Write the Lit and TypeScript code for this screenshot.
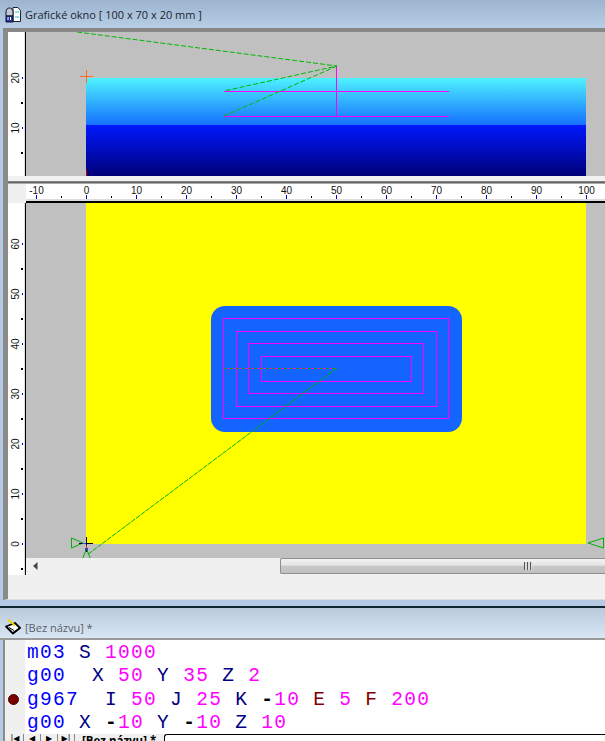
import { LitElement, html, css, svg } from 'lit';
import { customElement } from 'lit/decorators.js';

const CODE = [
  'm03 S 1000',
  'g00  X 50 Y 35 Z 2',
  'g967  I 50 J 25 K -10 E 5 F 200',
  'g00 X -10 Y -10 Z 10',
];

// x ruler: 5px per mm, 0 sits at page x 86
const mmX = (v: number) => 86 + v * 5;

function tokenClass(tok: string) {
  if (/^[gm]\d+$/.test(tok)) return 'cmd';
  if (/^\d+$/.test(tok)) return 'num';
  if (tok === '-') return 'minus';
  if (tok === 'E' || tok === 'F') return 'arg2';
  return 'arg';
}

function vRuler(top: number, h: number, labels: number[], base: number) {
  const items = [];
  for (const v of labels) {
    const y = base - v * 5;
    items.push(svg`<rect x="22" y=${y} width="1" height="2" fill="#0000c8"></rect>`);
    items.push(svg`<rect x="21" y=${y + 25} width="2" height="2" fill="#000"></rect>`);
    items.push(svg`<text transform="translate(19 ${y + 1}) rotate(-90)" text-anchor="middle" class="rt">${v}</text>`);
  }
  return html`<svg class="vruler" width="18" height=${h} viewBox="8 ${top} 18 ${h}">${items}</svg>`;
}

@customElement('app-root')
export class AppRoot extends LitElement {
  static styles = css`
    :host {
      display: block;
      width: 605px;
      height: 741px;
      overflow: hidden;
      background: #b4cbe3;
      font-family: 'Open Sans', 'Liberation Sans', sans-serif;
    }
    svg {
      display: block;
    }
    .title {
      display: flex;
      align-items: center;
      gap: 4px;
      padding-left: 5px;
      height: 28px;
      box-sizing: border-box;
      background: linear-gradient(#9cb4ce, #b7cee6);
      font-size: 11px;
      color: #1c2430;
    }
    .frame {
      margin-left: 3px;
      height: 572px;
      box-sizing: border-box;
      border-top: 4px solid #888;
      border-left: 5px solid #8a8a8a;
      border-bottom: 1px solid #ddd;
      background: #f0f0f0;
      overflow: hidden;
    }
    .pane {
      display: flex;
    }
    .vruler {
      flex: none;
      background: linear-gradient(90deg, #fff 16px, #ddd 16px, #ddd 17px, #000 17px);
    }
    .splitter {
      height: 8px;
      background: linear-gradient(#f2f2f2 5px, #999 5px, #666 6px, #666 7px, #aaa 7px);
    }
    .hrow {
      display: flex;
      height: 19px;
    }
    .corner {
      width: 18px;
      flex: none;
      background: #f0f0f0;
    }
    .hruler {
      flex: none;
      background: linear-gradient(#fff 15px, #ddd 15px, #ddd 17px, #000 17px);
    }
    .rt {
      font: 10px 'Liberation Sans', sans-serif;
      fill: #111;
    }
    .canvas {
      flex: none;
      background: #c0c0c0;
    }
    .main {
      display: flex;
      flex-direction: column;
    }
    .scroll {
      display: flex;
      align-items: stretch;
      width: 579px;
      height: 16px;
      background: #f0f0f0;
    }
    .sbtn {
      width: 18px;
      flex: none;
      display: flex;
      align-items: center;
      justify-content: center;
    }
    .track {
      width: 236px;
      flex: none;
    }
    .thumb {
      flex: 1;
      display: flex;
      align-items: center;
      padding-left: 243px;
      border: 1px solid #8f8f8f;
      border-right: none;
      border-radius: 2px 0 0 2px;
      background: linear-gradient(#f2f2f2, #e4e4e4 45%, #c8c8c8 50%, #c0c0c0);
    }
    .grip {
      width: 8px;
      height: 8px;
      background: repeating-linear-gradient(90deg, #555 0 1px, #ddd 1px 3px);
    }
    .strip {
      height: 8px;
      box-sizing: border-box;
      border-bottom: 2px solid #0c2830;
    }
    .title2 {
      display: flex;
      align-items: center;
      gap: 4px;
      padding: 8px 0 0 5px;
      height: 32px;
      box-sizing: border-box;
      background: linear-gradient(#b9cadb, #d8e6f4);
      border-bottom: 2px solid #9a9a9a;
      font-size: 11px;
      color: #5a5f6a;
    }
    .editor {
      display: flex;
      margin-left: 3px;
      height: 94px;
      border-left: 2px solid #8a8a8a;
      background: #fff;
      overflow: hidden;
    }
    .gutter {
      width: 20px;
      flex: none;
      display: flex;
      flex-direction: column;
      background: #f0f0f0;
      padding-top: 54px;
      box-sizing: border-box;
    }
    .dot {
      width: 11px;
      height: 11px;
      box-sizing: border-box;
      margin: 0 0 0 3px;
      border-radius: 50%;
      background: #7a0000;
      border: 1px solid #400000;
    }
    .codewrap {
      padding: 2px 0 0 2px;
    }
    .code {
      font: 19.5px/23.4px 'Liberation Mono', 'Courier New', monospace;
      letter-spacing: 1.3px;
      white-space: pre;
    }
    .cmd { color: #0000ff; }
    .arg { color: #000080; }
    .arg2 { color: #800000; }
    .num { color: #ff00ff; }
    .minus { color: #000; font-weight: bold; }
    .tabs {
      display: flex;
      align-items: flex-start;
      height: 7px;
      overflow: hidden;
      padding-left: 2px;
      font: bold 11.5px/14px 'Open Sans', sans-serif;
      color: #000;
      background: #f0f0f0;
      border-left: 2px solid #8a8a8a;
      margin-left: 3px;
    }
    .nav {
      width: 17px;
      height: 7px;
      flex: none;
      box-sizing: border-box;
      border-right: 1px solid #888;
      text-align: center;
      font: 8px/10px 'DejaVu Sans', sans-serif;
    }
    .tabname {
      padding: 0 8px 0 7px;
      flex: none;
    }
    .tabfill {
      flex: 1;
      height: 7px;
      box-sizing: border-box;
      border-top: 1px solid #000;
      border-left: 1px solid #000;
      border-radius: 3px 0 0 0;
      background: #fff;
    }
  `;

  private renderHRuler() {
    const items = [];
    for (let v = -10; v <= 100; v += 10) {
      const x = mmX(v);
      items.push(svg`<rect x=${x} y="195" width="1" height="4" fill="#0000c8"></rect>`);
      items.push(svg`<rect x=${x + 25} y="196" width="1" height="2" fill="#000"></rect>`);
      items.push(svg`<text x=${x + 0.5} y="194" text-anchor="middle" class="rt">${v}</text>`);
    }
    return html`<svg class="hruler" width="579" height="19" viewBox="26 184 579 19">${items}</svg>`;
  }

  private renderTop() {
    return html`<svg class="canvas" width="579" height="144" viewBox="26 32 579 144">
      <defs>
        <linearGradient id="g1" x1="0" y1="0" x2="0" y2="1">
          <stop offset="0" stop-color="#4ff2ff"></stop>
          <stop offset="1" stop-color="#1470ff"></stop>
        </linearGradient>
        <linearGradient id="g2" x1="0" y1="0" x2="0" y2="1">
          <stop offset="0" stop-color="#0018ff"></stop>
          <stop offset="1" stop-color="#000078"></stop>
        </linearGradient>
      </defs>
      <rect x="86" y="78" width="500" height="47" fill="url(#g1)"></rect>
      <rect x="86" y="125" width="500" height="51" fill="url(#g2)"></rect>
      <rect x="86" y="170" width="1" height="6" fill="#c00000"></rect>
      <g stroke="#ff00ff" stroke-width="1" shape-rendering="crispEdges">
        <line x1="224" y1="91.5" x2="449" y2="91.5"></line>
        <line x1="224" y1="116.5" x2="449" y2="116.5"></line>
        <line x1="336.5" y1="66" x2="336.5" y2="116"></line>
      </g>
      <g stroke="#00b800" stroke-width="1" stroke-dasharray="5 2" fill="none">
        <polyline points="77,32 337,66 224,91"></polyline>
        <line x1="337" y1="66" x2="224" y2="116"></line>
      </g>
      <g stroke="#ff6a20" stroke-width="1" shape-rendering="crispEdges">
        <line x1="80" y1="76.5" x2="93" y2="76.5"></line>
        <line x1="86.5" y1="70" x2="86.5" y2="83"></line>
      </g>
    </svg>`;
  }

  private renderMain() {
    const rects = [
      [223.5, 318.5, 225, 100],
      [236.5, 331.5, 200, 75],
      [248.5, 343.5, 175, 50],
      [261.5, 356.5, 150, 25],
    ];
    return html`<svg class="canvas" width="579" height="355" viewBox="26 203 579 355">
      <rect x="86" y="203" width="500" height="341" fill="#ffff00"></rect>
      <rect x="211" y="306" width="251" height="126" rx="14" fill="#1464ff"></rect>
      <g fill="none" stroke="#ff00ff" shape-rendering="crispEdges">
        ${rects.map(
          ([x, y, w, h]) => svg`<rect x=${x} y=${y} width=${w} height=${h}></rect>`,
        )}
      </g>
      <line x1="224" y1="368.5" x2="336" y2="368.5" stroke="#ff00ff" shape-rendering="crispEdges"></line>
      <g fill="none" stroke="#00b000">
        <line x1="224" y1="368.5" x2="336" y2="368.5" stroke-dasharray="3 3" shape-rendering="crispEdges"></line>
        <line x1="337" y1="368" x2="87" y2="555" stroke-dasharray="5 1"></line>
        <polygon points="71.5,538 83,543 71.5,548"></polygon>
        <polygon points="603.5,538 588,543 603.5,548"></polygon>
        <polygon points="86.5,549 82,560 91,560"></polygon>
      </g>
      <g shape-rendering="crispEdges">
        <line x1="79" y1="543.5" x2="93" y2="543.5" stroke="#000"></line>
        <line x1="86.5" y1="537" x2="86.5" y2="552" stroke="#000"></line>
        <rect x="82" y="543" width="4" height="1" fill="#2050d0"></rect>
        <rect x="86" y="545" width="1" height="3" fill="#d03030"></rect>
        <rect x="85" y="548" width="3" height="3" fill="#2050a0"></rect>
      </g>
    </svg>`;
  }

  private renderCode(line: string) {
    const toks = line.match(/[gm]\d+|\d+|\s+|-|[A-Z]/g) ?? [];
    return html`<div class="code">${toks.map((t) =>
      /^\s+$/.test(t) ? t : html`<span class=${tokenClass(t)}>${t}</span>`,
    )}</div>`;
  }

  render() {
    return html`
      <div class="title">
        <svg width="16" height="17" viewBox="0 0 16 17">
          <path d="M8 1.5h5l2.5 3v11H8z" fill="#fff" stroke="#223" stroke-width="1"></path>
          <path d="M10 6h4M10 11h4" stroke="#30c0d0" stroke-width="1"></path>
          <path d="M1 6c0-3 2-4 3.500-4S8 3 8 6v4H1z" fill="#c4c8d4" stroke="#112" stroke-width="1"></path>
          <path d="M1 10h7v6H1z" fill="#2438a8" stroke="#112" stroke-width="1"></path>
          <path d="M3 11v3M5.500 11v3" stroke="#fff" stroke-width="1"></path>
        </svg>
        <span>Grafické okno [ 100 x 70 x 20 mm ]</span>
      </div>
      <div class="frame">
        <div class="pane">
          ${vRuler(32, 144, [20, 10], 177)}
          ${this.renderTop()}
        </div>
        <div class="splitter"></div>
        <div class="hrow">
          <div class="corner"></div>
          ${this.renderHRuler()}
        </div>
        <div class="pane">
          ${vRuler(203, 372, [60, 50, 40, 30, 20, 10, 0], 543)}
          <div class="main">
            ${this.renderMain()}
            <div class="scroll">
              <div class="sbtn">
                <svg width="5" height="8" viewBox="0 0 5 8"><path d="M4.500 0v8L0 4z" fill="#444"></path></svg>
              </div>
              <div class="track"></div>
              <div class="thumb"><div class="grip"></div></div>
            </div>
          </div>
        </div>
      </div>
      <div class="strip"></div>
      <div class="title2">
        <svg width="16" height="16" viewBox="0 0 16 16">
          <path d="M1 7.500L10 4l5 5-7 5.500z" fill="#fff" stroke="#000" stroke-width="1.800" stroke-linejoin="round"></path>
          <path d="M8 15l7.500-6v-1L8 13z" fill="#000"></path>
          <path d="M3 0.500l7 6" stroke="#e8d800" stroke-width="2"></path>
          <path d="M4 8.500l5 3" stroke="#000" stroke-width="1"></path>
        </svg>
        <span>[Bez názvu] *</span>
      </div>
      <div class="editor">
        <div class="gutter"><div class="dot"></div></div>
        <div class="codewrap">${CODE.map((l) => this.renderCode(l))}</div>
      </div>
      <div class="tabs">
        <div class="nav">|◀</div>
        <div class="nav">◀</div>
        <div class="nav">▶</div>
        <div class="nav">▶|</div>
        <div class="tabname">[Bez názvu] *</div>
        <div class="tabfill"></div>
      </div>
    `;
  }
}
